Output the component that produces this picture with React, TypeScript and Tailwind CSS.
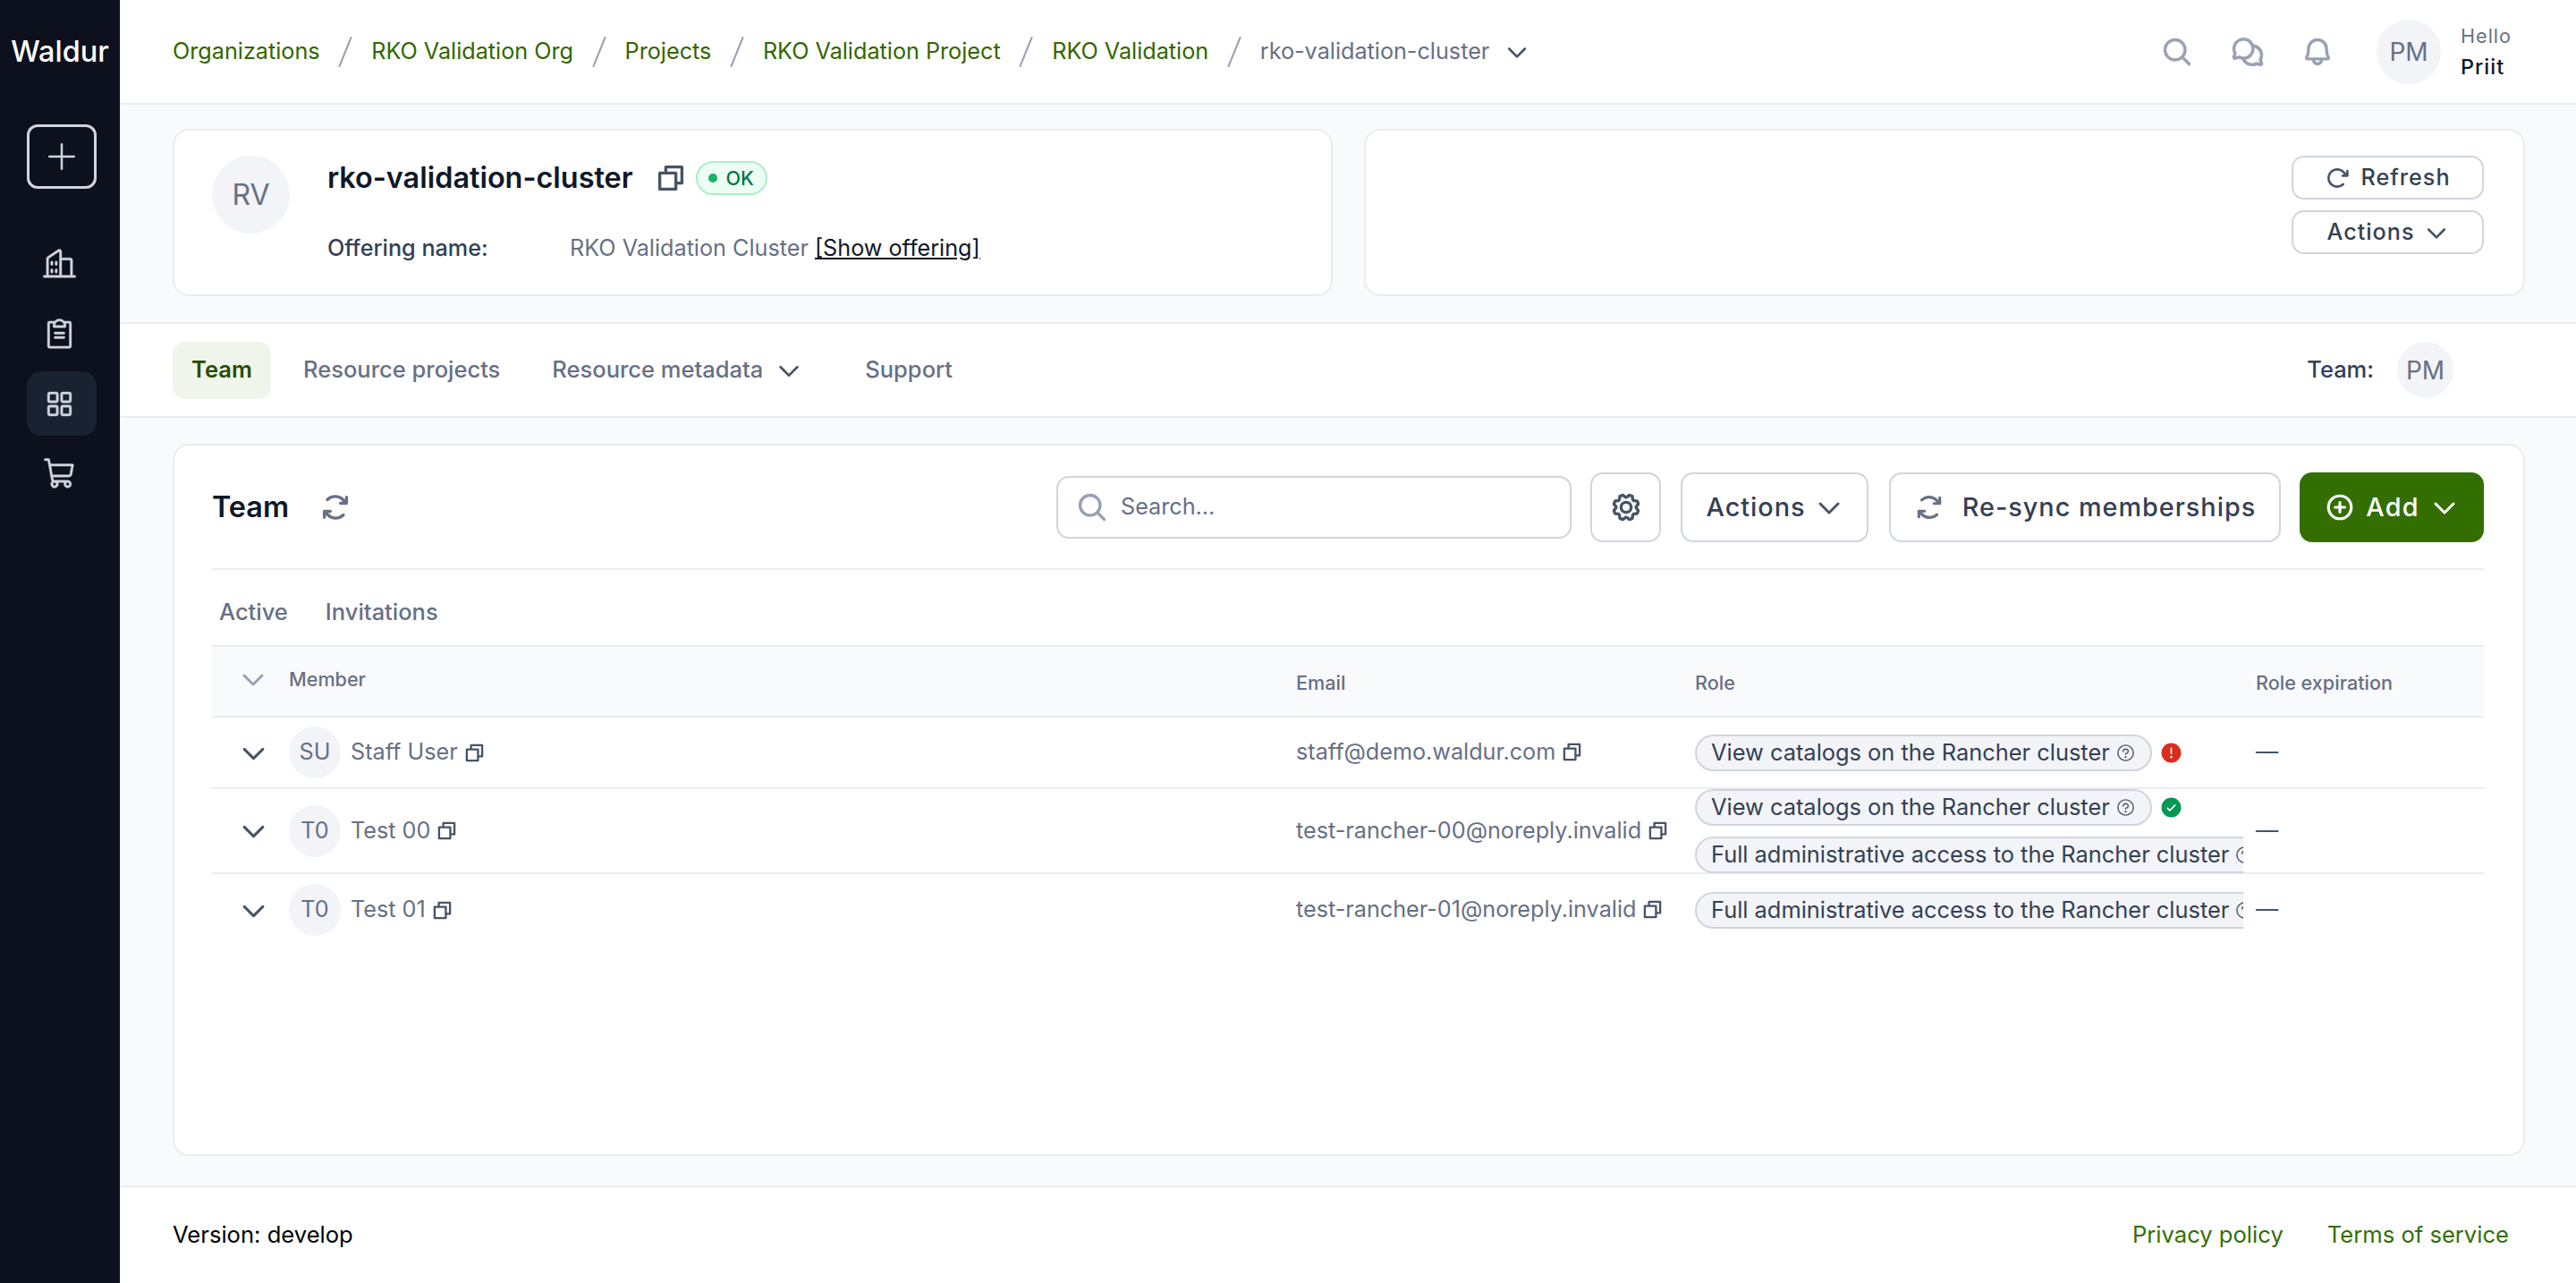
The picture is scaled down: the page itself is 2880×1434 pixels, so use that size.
import type { ReactNode } from "react"
import {
  PiArrowClockwiseBold,
  PiArrowsClockwiseBold,
  PiBellBold,
  PiBuildings,
  PiCaretDownBold,
  PiChatsCircleBold,
  PiCheckCircleFill,
  PiClipboardText,
  PiCopyBold,
  PiGearBold,
  PiMagnifyingGlassBold,
  PiPlus,
  PiPlusCircleBold,
  PiQuestion,
  PiShoppingCart,
  PiSquaresFour,
  PiWarningCircleFill,
} from "react-icons/pi"

function Slash() {
  return (
    <svg width="16" height="34" viewBox="0 0 16 34" className="shrink-0 text-[#98a2b3]">
      <line x1="14.5" y1="1" x2="1.5" y2="33" stroke="currentColor" strokeWidth="2" strokeLinecap="round" />
    </svg>
  )
}

function Avatar({ text, className }: { text: string; className: string }) {
  return (
    <div className={`flex shrink-0 items-center justify-center rounded-full bg-[#f2f4f7] text-[#667085] ${className}`}>
      {text}
    </div>
  )
}

function Crumbs() {
  const links = ["Organizations", "RKO Validation Org", "Projects", "RKO Validation Project", "RKO Validation"]
  return (
    <nav className="flex items-center gap-[20.8px] pt-[1px] text-[25.2px] text-[#336600]">
      {links.map((l) => (
        <div key={l} className="flex items-center gap-[20.8px]">
          <span>{l}</span>
          <Slash />
        </div>
      ))}
      <span className="text-[#667085]">rko-validation-cluster</span>
      <PiCaretDownBold className="-ml-[4px] text-[28px] text-[#475467]" />
    </nav>
  )
}

function Header() {
  return (
    <header className="flex h-[117px] shrink-0 items-center justify-between border-b-2 border-[#eaecf0] bg-white pl-[59px] pr-[59px]">
      <Crumbs />
      <div className="flex items-center">
        <PiMagnifyingGlassBold className="text-[36px] text-[#98a2b3]" />
        <PiChatsCircleBold className="ml-[42px] text-[38px] text-[#98a2b3]" />
        <PiBellBold className="ml-[41px] text-[36px] text-[#98a2b3]" />
        <Avatar text="PM" className="ml-[48px] h-[72px] w-[72px] text-[28px]" />
        <div className="ml-[22px] w-[70px]">
          <div className="text-[21.6px] leading-[34px] tracking-[1px] text-[#667085]">Hello</div>
          <div className="pt-[1px] text-[23.4px] font-medium leading-[34px] tracking-[1px] text-[#101828]">Priit</div>
        </div>
      </div>
    </header>
  )
}

function InfoCards() {
  return (
    <section className="flex shrink-0 gap-[35px] pb-[29px] pl-[59px] pr-[57px] pt-[27px]">
      <div className="flex h-[187px] w-[1297px] rounded-[18px] border-2 border-[#eaecf0] bg-white pl-[42px] pt-[28px]">
        <Avatar text="RV" className="h-[87px] w-[87px] text-[32px]" />
        <div className="ml-[42px]">
          <div className="flex h-[50px] items-center">
            <h1 className="text-[32.4px] font-semibold leading-none text-[#101828]">rko-validation-cluster</h1>
            <PiCopyBold className="ml-[24px] text-[36px] text-[#475467]" />
            <div className="ml-[10px] flex h-[38px] w-[80px] items-center justify-center gap-[9px] rounded-full border-2 border-[#abefc6] bg-[#ecfdf3] text-[21.6px] font-medium text-[#067647]">
              <span className="h-[10px] w-[10px] rounded-full bg-[#17b26a]" />
              OK
            </div>
          </div>
          <div className="mt-[35px] flex text-[25.2px]">
            <span className="w-[271px] font-medium text-[#344054]">Offering name:</span>
            <span className="text-[#667085]">RKO Validation Cluster</span>
            <a className="ml-[7px] text-[#101828] underline">[Show offering]</a>
          </div>
        </div>
      </div>
      <div className="flex h-[187px] flex-1 flex-col items-end gap-[12px] rounded-[18px] border-2 border-[#eaecf0] bg-white pr-[44px] pt-[28px]">
        <button className="flex h-[49px] w-[215px] items-center justify-center gap-[12px] rounded-[14px] border-2 border-[#d0d5dd] text-[25.2px] font-medium tracking-[1px] text-[#344054]">
          <PiArrowClockwiseBold className="text-[28px] text-[#475467]" />
          Refresh
        </button>
        <button className="flex h-[49px] w-[215px] items-center justify-center gap-[10px] rounded-[14px] border-2 border-[#d0d5dd] text-[25.2px] font-medium tracking-[1px] text-[#344054]">
          Actions
          <PiCaretDownBold className="text-[28px] text-[#475467]" />
        </button>
      </div>
    </section>
  )
}

function TabBar() {
  return (
    <div className="flex h-[107px] shrink-0 items-center border-y-2 border-[#eaecf0] bg-white pl-[59px] pr-[137px] text-[25.5px] font-medium text-[#667085]">
      <div className="flex h-[64px] w-[110px] items-center justify-center rounded-[14px] bg-[#f0f5ec] font-semibold text-[#264d00]">Team</div>
      <span className="ml-[36px]">Resource projects</span>
      <span className="ml-[58px]">Resource metadata</span>
      <PiCaretDownBold className="ml-[14px] text-[30px] text-[#475467]" />
      <span className="ml-[70px]">Support</span>
      <span className="ml-auto text-[#344054]">Team:</span>
      <Avatar text="PM" className="ml-[26px] h-[63px] w-[63px] text-[28px] font-normal" />
    </div>
  )
}

function OutlineButton({ children, className }: { children: ReactNode; className: string }) {
  return (
    <button className={`flex h-[78px] items-center justify-center rounded-[14px] border-2 border-[#d0d5dd] bg-white text-[28.8px] font-medium tracking-[1px] text-[#344054] ${className}`}>
      {children}
    </button>
  )
}

function Toolbar() {
  return (
    <div className="flex h-[139px] items-center border-b-2 border-[#eaecf0]">
      <h2 className="pt-[2px] text-[32.4px] font-semibold text-[#101828]">Team</h2>
      <PiArrowsClockwiseBold className="ml-[34px] text-[36px] text-[#667085]" />
      <div className="ml-auto flex h-[70px] w-[576px] items-center rounded-[14px] border-2 border-[#d0d5dd] pl-[20px] text-[25.2px] text-[#667085]">
        <PiMagnifyingGlassBold className="text-[36px] text-[#98a2b3]" />
        <span className="ml-[14px]">Search...</span>
      </div>
      <OutlineButton className="ml-[21px] w-[79px]">
        <PiGearBold className="text-[36px] text-[#475467]" />
      </OutlineButton>
      <OutlineButton className="ml-[22px] w-[210px] gap-[10px]">
        Actions
        <PiCaretDownBold className="text-[32px] text-[#475467]" />
      </OutlineButton>
      <OutlineButton className="ml-[23px] w-[438px] gap-[20px]">
        <PiArrowsClockwiseBold className="text-[34px] text-[#667085]" />
        Re-sync memberships
      </OutlineButton>
      <button className="ml-[21px] flex h-[78px] w-[206px] items-center justify-center gap-[12px] rounded-[14px] bg-[#336f00] text-[28.8px] font-medium tracking-[1.2px] text-white">
        <PiPlusCircleBold className="text-[34px]" />
        Add
        <PiCaretDownBold className="text-[32px]" />
      </button>
    </div>
  )
}

const gridCols = "grid grid-cols-[86px_1126px_446px_627px_255px]"

function CopyIcon() {
  return <PiCopyBold className="ml-[6px] shrink-0 text-[25px] text-[#475467]" />
}

function RolePill({ label, status }: { label: string; status?: "error" | "ok" }) {
  return (
    <div className="flex items-center">
      <div className="flex h-[41px] shrink-0 items-center rounded-full border-2 border-[#d0d5dd] bg-[#f2f4f7] pl-[16px] pr-[16px] text-[25.4px] text-[#344054]">
        {label}
        <PiQuestion className="ml-[6px] text-[23px] text-[#475467]" />
      </div>
      {status === "error" && <PiWarningCircleFill className="ml-[8px] shrink-0 text-[27px] text-[#d92d20]" />}
      {status === "ok" && <PiCheckCircleFill className="ml-[8px] shrink-0 text-[27px] text-[#039855]" />}
    </div>
  )
}

type Member = {
  initials: string
  name: string
  email: string
  roles: { label: string; status?: "error" | "ok" }[]
  height: string
}

const viewCatalogs = "View catalogs on the Rancher cluster"
const fullAccess = "Full administrative access to the Rancher cluster"

const members: Member[] = [
  { initials: "SU", name: "Staff User", email: "staff@demo.waldur.com", roles: [{ label: viewCatalogs, status: "error" }], height: "h-[80px] border-b-2 border-[#eaecf0]" },
  {
    initials: "T0",
    name: "Test 00",
    email: "test-rancher-00@noreply.invalid",
    roles: [{ label: viewCatalogs, status: "ok" }, { label: fullAccess }],
    height: "h-[95px] border-b-2 border-[#eaecf0]",
  },
  { initials: "T0", name: "Test 01", email: "test-rancher-01@noreply.invalid", roles: [{ label: fullAccess }], height: "h-[80px]" },
]

function MembersTable() {
  return (
    <div>
      <div className={`${gridCols} h-[81px] border-y-2 border-[#eaecf0] bg-[#f9fafb] text-[21.6px] font-medium text-[#667085]`}>
        <div className="flex items-start justify-center pl-[6px] pt-[20px]">
          <PiCaretDownBold className="text-[32px] text-[#98a2b3]" />
        </div>
        <div className="pt-[20px]">Member</div>
        <div className="pt-[24px]">Email</div>
        <div className="pt-[24px]">Role</div>
        <div className="pt-[24px]">Role expiration</div>
      </div>
      {members.map((m) => (
        <div key={m.email} className={`${gridCols} ${m.height} items-center text-[25.2px] text-[#667085]`}>
          <div className="flex justify-center pl-[6px]">
            <PiCaretDownBold className="text-[33px] text-[#475467]" />
          </div>
          <div className="flex items-center">
            <Avatar text={m.initials} className="h-[58px] w-[58px] text-[25.2px]" />
            <span className="ml-[11px]">{m.name}</span>
            <CopyIcon />
          </div>
          <div className="flex items-center">
            {m.email}
            <CopyIcon />
          </div>
          <div className="flex w-[613px] flex-col gap-[12px] overflow-hidden">
            {m.roles.map((r) => (
              <RolePill key={r.label} label={r.label} status={r.status} />
            ))}
          </div>
          <div className="text-[#475467]">—</div>
        </div>
      ))}
    </div>
  )
}

function TeamCard() {
  return (
    <main className="flex-1 bg-[#f9fafb] pb-[33px] pl-[59px] pr-[57px] pt-[29px]">
      <div className="h-full rounded-[18px] border-2 border-[#eaecf0] bg-white pl-[42px] pr-[44px]">
        <Toolbar />
        <div className="flex h-[84px] items-center gap-[42px] pl-[8px] pt-[10px] text-[25.5px] font-medium text-[#667085]">
          <span>Active</span>
          <span>Invitations</span>
        </div>
        <MembersTable />
      </div>
    </main>
  )
}

function Sidebar() {
  return (
    <aside className="flex w-[134px] shrink-0 flex-col items-center bg-[#0c111d] text-[#d0d5dd]">
      <div className="flex h-[117px] items-center text-[32.4px] font-medium text-white">Waldur</div>
      <button className="ml-[3px] mt-[22px] flex h-[72px] w-[78px] items-center justify-center rounded-[12px] border-[3px] border-[#d0d5dd]">
        <PiPlus className="text-[40px]" />
      </button>
      <div className="ml-[3px] mt-[48px] flex flex-col gap-[6px]">
        {[PiBuildings, PiClipboardText, PiSquaresFour, PiShoppingCart].map((Icon, i) => (
          <div key={i} className={`flex h-[72px] w-[78px] items-center justify-center rounded-[16px] ${i === 2 ? "bg-[#182230]" : ""}`}>
            <Icon className="-ml-[4px] stroke-current stroke-[3] text-[39px]" />
          </div>
        ))}
      </div>
    </aside>
  )
}

function Footer() {
  return (
    <footer className="flex h-[109px] shrink-0 items-center justify-between border-t-2 border-[#eaecf0] bg-white pl-[59px] pr-[75px] text-[25.6px]">
      <span className="text-black">Version: develop</span>
      <div className="flex gap-[49px] text-[#336f00]">
        <span>Privacy policy</span>
        <span>Terms of service</span>
      </div>
    </footer>
  )
}

export default function App() {
  return (
    <div className="flex h-screen font-['Inter',sans-serif]">
      <Sidebar />
      <div className="flex min-w-0 flex-1 flex-col bg-[#f9fafb]">
        <Header />
        <InfoCards />
        <TabBar />
        <TeamCard />
        <Footer />
      </div>
    </div>
  )
}
